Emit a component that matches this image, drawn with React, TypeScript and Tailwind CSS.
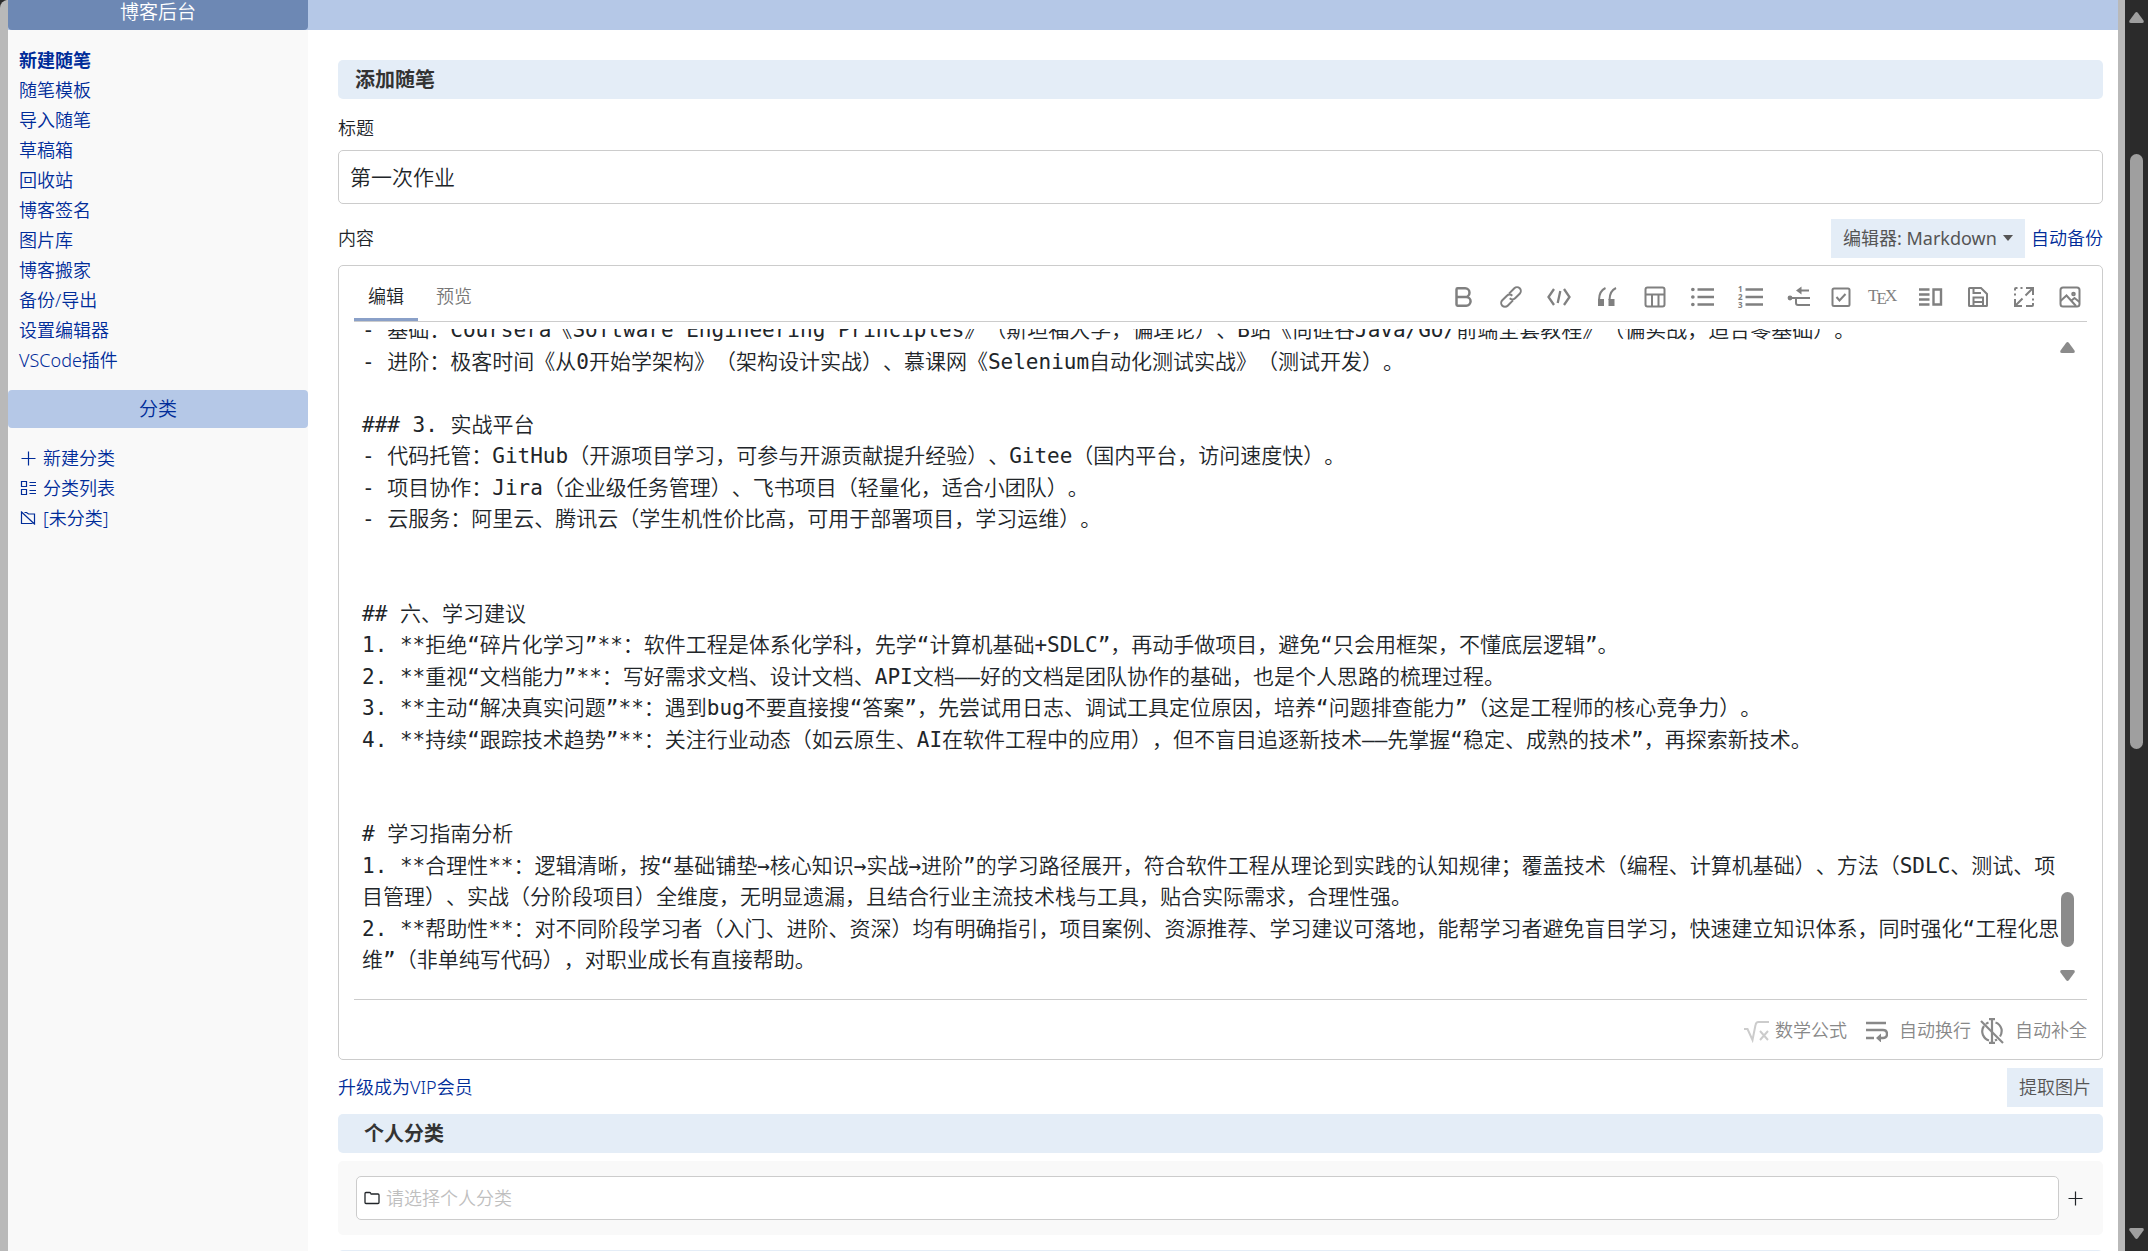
import React, { useEffect, useRef, useState } from 'react'
import { Bold } from 'lucide-react'

const MENU = [
  '新建随笔',
  '随笔模板',
  '导入随笔',
  '草稿箱',
  '回收站',
  '博客签名',
  '图片库',
  '博客搬家',
  '备份/导出',
  '设置编辑器',
  'VSCode插件',
]

const POST = `- 基础：Coursera《Software Engineering Principles》（斯坦福大学，偏理论）、B站《尚硅谷Java/Go/前端全套教程》（偏实战，适合零基础）。
- 进阶：极客时间《从0开始学架构》（架构设计实战）、慕课网《Selenium自动化测试实战》（测试开发）。

### 3. 实战平台
- 代码托管：GitHub（开源项目学习，可参与开源贡献提升经验）、Gitee（国内平台，访问速度快）。
- 项目协作：Jira（企业级任务管理）、飞书项目（轻量化，适合小团队）。
- 云服务：阿里云、腾讯云（学生机性价比高，可用于部署项目，学习运维）。


## 六、学习建议
1. **拒绝“碎片化学习”**：软件工程是体系化学科，先学“计算机基础+SDLC”，再动手做项目，避免“只会用框架，不懂底层逻辑”。
2. **重视“文档能力”**：写好需求文档、设计文档、API文档——好的文档是团队协作的基础，也是个人思路的梳理过程。
3. **主动“解决真实问题”**：遇到bug不要直接搜“答案”，先尝试用日志、调试工具定位原因，培养“问题排查能力”（这是工程师的核心竞争力）。
4. **持续“跟踪技术趋势”**：关注行业动态（如云原生、AI在软件工程中的应用），但不盲目追逐新技术——先掌握“稳定、成熟的技术”，再探索新技术。


# 学习指南分析
1. **合理性**：逻辑清晰，按“基础铺垫→核心知识→实战→进阶”的学习路径展开，符合软件工程从理论到实践的认知规律；覆盖技术（编程、计算机基础）、方法（SDLC、测试、项目管理）、实战（分阶段项目）全维度，无明显遗漏，且结合行业主流技术栈与工具，贴合实际需求，合理性强。
2. **帮助性**：对不同阶段学习者（入门、进阶、资深）均有明确指引，项目案例、资源推荐、学习建议可落地，能帮学习者避免盲目学习，快速建立知识体系，同时强化“工程化思维”（非单纯写代码），对职业成长有直接帮助。`

export default function App() {
  return (
    <div className="flex h-screen overflow-hidden bg-[#2b2b2b] font-['Noto_Sans','Noto_Sans_CJK_SC',sans-serif] text-[18px] leading-[27px] font-[350] text-[#212529]">
      <div className="flex min-w-0 flex-1 flex-col overflow-hidden rounded-tl-lg border-r-[7px] border-l-8 border-[#b9b9b9] bg-white">
        <header className="flex h-[30px] shrink-0 bg-[#b5c8e7]">
          <a
            href="#"
            className="flex w-[300px] items-center justify-center rounded-b-[4px] bg-[#6d88b4] pb-[6px] text-[19px] leading-6 text-white"
          >
            博客后台
          </a>
        </header>
        <div className="flex min-h-0 flex-1">
          <Sidebar />
          <EditPost />
        </div>
      </div>
      <PageScrollbar />
    </div>
  )
}

function Sidebar() {
  return (
    <aside className="w-[300px] shrink-0 bg-[#f9f9f9] pt-[15px] text-[#002c99]">
      <nav className="flex flex-col items-start pl-[11px] leading-[30px]">
        {MENU.map((item, i) => (
          <a key={item} href="#" className={i === 0 ? 'font-bold' : ''}>
            {item}
          </a>
        ))}
      </nav>
      <h2 className="mt-[15px] flex h-[38px] items-center justify-center rounded-[4px] bg-[#b5c8e7] text-[19px]">
        分类
      </h2>
      <nav className="mt-[15px] flex flex-col items-start pl-3 leading-[30px]">
        <a href="#" className="flex items-center gap-[7px]">
          <PlusIcon />
          新建分类
        </a>
        <a href="#" className="flex items-center gap-[7px]">
          <svg className="size-4" viewBox="0 0 16 16" fill="none" stroke="currentColor" strokeWidth="1.2">
            <path d="M1.5 1.5h5v5h-5zM1.5 9.5h5v5h-5zM9.5 2.5H16M9.5 5.5H16M9.5 10.5H16M9.5 13.5H16" />
          </svg>
          分类列表
        </a>
        <a href="#" className="flex items-center gap-[7px]">
          <svg className="size-4" viewBox="0 0 16 16" fill="none" stroke="currentColor" strokeWidth="1.2">
            <path d="M4.5 2.5h2l2 1.5h6v9.5M1.5 2.5v11h11M1 1.5l14 13" />
          </svg>
          [未分类]
        </a>
      </nav>
    </aside>
  )
}

function EditPost() {
  const [title, setTitle] = useState('第一次作业')

  return (
    <main className="min-w-0 flex-1 pt-[30px] pr-[15px] pl-[30px]">
      <h1 className="flex h-[39px] items-center rounded-[5px] bg-[#e4edf7] px-[17px] text-[20px] font-bold text-[#333]">
        添加随笔
      </h1>

      <label htmlFor="title" className="mt-4 block">
        标题
      </label>
      <input
        id="title"
        value={title}
        onChange={(e) => setTitle(e.target.value)}
        className="mt-2 block h-[54px] w-full rounded-[5px] border border-[#ccc] px-[11px] pb-[2px] text-[21px] outline-none"
      />

      <div className="mt-[15px] flex h-[39px] items-center">
        <label htmlFor="content" className="mr-auto">
          内容
        </label>
        <div className="relative text-[#555]">
          <select
            aria-label="编辑器"
            className="h-[39px] appearance-none bg-[#e4edf7] pr-7 pl-3 font-normal outline-none"
          >
            <option>编辑器: Markdown</option>
          </select>
          <svg className="pointer-events-none absolute top-4 right-3 h-[6px] w-[10px]" viewBox="0 0 10 6" fill="currentColor">
            <path d="M0 0h10L5 6z" />
          </svg>
        </div>
        <a href="#" className="ml-[6px] text-[#002c99]">
          自动备份
        </a>
      </div>

      <MarkdownEditor />

      <div className="mt-2 flex items-center justify-between">
        <a href="#" className="text-[#002c99]">
          升级成为VIP会员
        </a>
        <button className="h-[39px] bg-[#e4edf7] px-3 text-[#555]">提取图片</button>
      </div>

      <h2 className="mt-[7px] flex h-[39px] items-center rounded-[5px] bg-[#e4edf7] px-[26px] text-[20px] font-bold text-[#333]">
        <label htmlFor="category">个人分类</label>
      </h2>
      <div className="mt-2 flex items-center rounded-[5px] bg-[#f9f9f9] py-[15px] pr-5 pl-[18px]">
        <div className="flex h-11 flex-1 items-center gap-[6px] rounded-[5px] border border-[#ccc] bg-white px-[7px]">
          <svg className="size-4" viewBox="0 0 16 16" fill="none" stroke="currentColor" strokeWidth="1.3">
            <path d="M1 12.5v-9q0-1 1-1h3.5q.8 0 1.2.8l.4.7h6.9q1 0 1 1v7.500q0 1-1 1H2q-1 0-1-1z" />
          </svg>
          <input
            id="category"
            placeholder="请选择个人分类"
            className="flex-1 outline-none placeholder:text-[#bfbfbf]"
          />
        </div>
        <button aria-label="添加分类" className="ml-2">
          <PlusIcon />
        </button>
      </div>
      <div className="mt-[15px] h-[39px] rounded-[5px] bg-[#e4edf7]" />
    </main>
  )
}

function MarkdownEditor() {
  const [content, setContent] = useState(POST)
  const ref = useRef<HTMLTextAreaElement>(null)

  // open at the end of the post
  useEffect(() => {
    if (ref.current) ref.current.scrollTop = ref.current.scrollHeight
  }, [])

  return (
    <div className="mt-[7px] rounded-[5px] border border-[#ccc] px-[15px]">
      <div className="flex h-14 items-stretch border-b border-[#ccc]">
        <button className="border-b-[3px] border-[#8aa0c8] px-[14px] pt-[9px]">编辑</button>
        <button className="px-[18px] pt-[6px] text-[#777]">预览</button>
        <Toolbar />
      </div>

      <div className="relative my-[7px] pr-[25px]">
        <textarea
          id="content"
          ref={ref}
          value={content}
          spellCheck={false}
          onChange={(e) => setContent(e.target.value)}
          className="block h-[663px] w-full resize-none pb-[15px] pl-2 font-['DejaVu_Sans_Mono','Noto_Sans_CJK_SC',monospace] text-[21px] leading-[1.5] outline-none [scrollbar-width:none] [text-spacing-trim:space-all]"
        />
        <div className="absolute inset-y-0 right-2 flex w-[23px] flex-col items-center pt-[13px] pb-[11px] text-[#8b8b8b]">
          <Triangle />
          <div className="mt-auto mb-[23px] h-[55px] w-[13px] rounded-full bg-current" />
          <Triangle down />
        </div>
      </div>

      <div className="flex h-[60px] items-center justify-end border-t border-[#ccc] pt-[2px] text-[#888]">
        <button className="flex items-center gap-[6px]">
          <svg className="size-[25px] text-[#ccc]" viewBox="0 0 25 25" fill="none" stroke="currentColor" strokeWidth="2">
            <path d="M0 11h3.500l5 11 3-15q.5-3 3-3H25M16 13l8 9M24 13l-8 9" />
          </svg>
          数学公式
        </button>
        <button className="ml-[19px] flex items-center gap-[11px]">
          <svg className="h-[22px] w-[22px]" viewBox="0 0 22 22" fill="none" stroke="currentColor" strokeWidth="2.4">
            <path d="M0 3h20M0 10h17q4 0 4 4t-4 4h-4M0 18h8" />
            <path d="M15 13.500v9L10 18z" fill="currentColor" stroke="none" />
          </svg>
          自动换行
        </button>
        <button className="ml-[9px] flex items-center gap-[11px]">
          <svg className="h-[26px] w-6" viewBox="0 0 24 26" fill="none" stroke="currentColor" strokeWidth="2.2">
            <path d="M8.500 4.500q-1.500.6-2.500 1.500M4 8Q1 12 3 17q2 4.500 6 5.500M15.500 4.500q4.500 1.500 6 6.500.7 4-1.500 7.500M17 21.500l-2 1" />
            <path d="M12 2v22M9 1.200h6M9 24.800h6" />
            <path d="M1 3l22 22" />
          </svg>
          自动补全
        </button>
      </div>
    </div>
  )
}

function Toolbar() {
  return (
    <div className="ml-auto flex items-center gap-6 pt-[6px] pr-[6px] text-[#808080]">
      <button aria-label="粗体" className="flex w-6 justify-center">
        <Bold size={26} strokeWidth={2.3} className="shrink-0" />
      </button>
      <Tool label="链接">
        <g transform="rotate(-45 12 12)">
          <path d="M11 15.800H3.500a3.800 3.800 0 0 1 0-7.600H10a3.800 3.800 0 0 1 3.800 3.800" />
          <path d="M13 8.200h7.500a3.800 3.800 0 0 1 0 7.600H14a3.800 3.800 0 0 1-3.800-3.800" />
        </g>
      </Tool>
      <Tool label="代码">
        <path d="M7 4 1.500 12 7 20M17 4l5.500 8-5.500 8M13.300 6l-2.600 12" strokeWidth="2.300" />
      </Tool>
      <Tool label="引用">
        <path d="M3 14h6v7H3zM13.500 14h6v7h-6z" fill="currentColor" stroke="none" />
        <path d="M4 15Q4 6 10.500 3M14.500 15Q14.500 6 21 3" />
      </Tool>
      <Tool label="表格">
        <rect x="2.500" y="2.500" width="19" height="19" rx="2" />
        <path d="M2.500 9.500h19M9 9.500v12M15.500 9.500v12" />
      </Tool>
      <Tool label="无序列表">
        <path d="M6.500 4.500H23M6.500 12H23M6.500 19.500H23" strokeWidth="2.400" />
        <path d="M1.800 4.500h.1M1.800 12h.1M1.800 19.500h.1" strokeWidth="3.600" strokeLinecap="round" />
      </Tool>
      <Tool label="有序列表">
        <path d="M6.500 4.500H24M6.500 12H24M6.500 19.500H24" strokeWidth="2.400" />
        <g fill="currentColor" stroke="none" fontSize="8" fontWeight="700">
          <text x="-1" y="7">1</text>
          <text x="-1" y="15">2</text>
          <text x="-1" y="23">3</text>
        </g>
      </Tool>
      <Tool label="折叠">
        <path d="M22 5.500H12M3 13h20M9 13v5q0 2 2 2h12" />
        <circle cx="3" cy="13" r="2.400" fill="currentColor" stroke="none" />
        <path d="M14.500 1.500v8L9 5.500z" fill="currentColor" stroke="none" />
      </Tool>
      <button aria-label="任务" className="flex w-3 justify-center">
        <svg className="size-6 shrink-0" viewBox="0 0 24 24" fill="none" stroke="currentColor" strokeWidth="2">
          <rect x="3.500" y="3.500" width="17" height="17.500" rx="1.500" />
          <path d="m7.500 12 3 3.500 6-6.500" />
        </svg>
      </button>
      <Tool label="公式">
        <g fill="currentColor" stroke="none" fontFamily="Liberation Serif, serif" fontSize="17" fontWeight="400">
          <text x="-3" y="16">T</text>
          <text x="5.500" y="19">E</text>
          <text x="14" y="16">X</text>
        </g>
      </Tool>
      <Tool label="分栏">
        <path d="M0 4.500h10.500M0 9.500h10.500M0 14.500h10.500M0 19.500h10.500" strokeWidth="2.400" />
        <path d="M14.500 4.500h7.500v15h-7.500z" strokeWidth="2.400" />
      </Tool>
      <ToolSmall label="保存">
        <path d="M3 3.500q0-.5.5-.5H15l6 6v11.500q0 .5-.5.500h-17q-.5 0-.5-.5zM7.500 21v-8.500h9.500V21M7.500 17H17M7.500 3v5H15" />
      </ToolSmall>
      <ToolSmall label="全屏">
        <path d="M3 10.500v-2M3 5.500V4q0-1 1-1h1.500M8.500 3h2M14 3h7v7M21 3l-7.500 7.500M3 14v7h7M3 21l7.500-7.500M21 13.500v2M21 18v2q0 1-1 1h-6" />
      </ToolSmall>
      <ToolSmall label="图片">
        <rect x="2.500" y="2.500" width="19" height="19" rx="2.500" />
        <path d="m2.500 16 6-5.500L18 21M13.500 15.500l3-2.500 5 4" />
        <circle cx="15.500" cy="9" r="1.300" />
      </ToolSmall>
    </div>
  )
}

function Tool({ label, children }: { label: string; children: React.ReactNode }) {
  return (
    <button aria-label={label} className="w-6">
      <svg className="size-6 overflow-visible" viewBox="0 0 24 24" fill="none" stroke="currentColor" strokeWidth="2">
        {children}
      </svg>
    </button>
  )
}

function ToolSmall({ label, children }: { label: string; children: React.ReactNode }) {
  return (
    <button aria-label={label} className="flex w-[22px] justify-center">
      <svg className="size-6 shrink-0" viewBox="0 0 24 24" fill="none" stroke="currentColor" strokeWidth="2">
        {children}
      </svg>
    </button>
  )
}

function PlusIcon() {
  return (
    <svg className="size-4" viewBox="0 0 16 16" fill="none" stroke="currentColor" strokeWidth="1.2">
      <path d="M1.500 8.500h14M8.500 1.500v14" />
    </svg>
  )
}

function Triangle({ down = false }: { down?: boolean }) {
  return (
    <svg
      className={down ? 'h-[11px] w-[15px] rotate-180' : 'h-[11px] w-[15px]'}
      viewBox="0 0 15 11"
      fill="currentColor"
    >
      <path d="M6 1q1.500-2 3 0l5.500 7.500Q15.500 11 13 11H2Q-.5 11 .5 8.500z" />
    </svg>
  )
}

function PageScrollbar() {
  return (
    <div className="flex w-[23px] shrink-0 flex-col items-center rounded-tr-lg py-3 text-[#9f9f9f]">
      <Triangle />
      <div className="flex w-[13px] flex-1 flex-col">
        <div className="mt-[131px] h-[595px] rounded-full bg-current" />
      </div>
      <Triangle down />
    </div>
  )
}
